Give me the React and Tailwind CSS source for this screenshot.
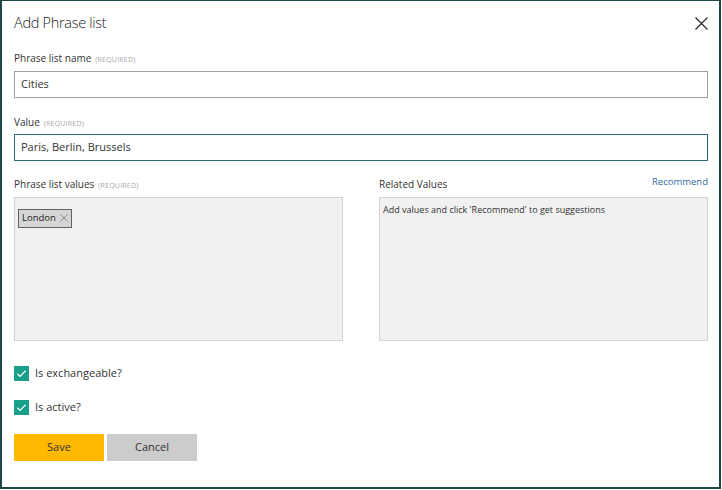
import React from 'react';

const font = { fontFamily: '"Open Sans", "Noto Sans", sans-serif' };

const Label = ({ children, required }) => (
  <div className="h-[14px] leading-[14px] text-[10px] text-[#333] whitespace-nowrap">
    {children}
    {required && <span className="ml-1 text-[7px] tracking-[0.2px] text-[#a8a8a8]">(REQUIRED)</span>}
  </div>
);

const Check = ({ label, className = '' }) => (
  <div className={`flex items-center h-[15px] ${className}`}>
    <span className="w-[15px] h-[15px] bg-[#1aa08a] flex items-center justify-center">
      <svg width="11" height="11" viewBox="0 0 12 12" fill="none">
        <path d="M1.5 6.2 L4.6 9.2 L10.6 2.8" stroke="#fff" strokeWidth="1.4" />
      </svg>
    </span>
    <span className="ml-[6px] text-[11px] text-[#333]">{label}</span>
  </div>
);

export default function App() {
  return (
    <div style={font} className="w-[722px] h-[490px] bg-white">
      <div className="w-[721px] h-[489px] border-x-2 border-b-2 border-t border-[#1d4848] pl-[12px] pt-[11px]">
        <div className="w-[694px]">
          {/* Header */}
          <div className="flex items-center justify-between h-[22px]">
            <div className="text-[14.5px] leading-[22px] font-light tracking-[-0.3px] text-[#222]">Add Phrase list</div>
            <svg width="13" height="13" viewBox="0 0 13 13">
              <path d="M0.5 0.5 L12.5 12.5 M12.5 0.5 L0.5 12.5" stroke="#222" strokeWidth="1.1" />
            </svg>
          </div>

          <div className="mt-[17px]">
            <Label required>Phrase list name</Label>
          </div>
          <div className="mt-[6px] h-[27px] border border-[#a0a0a0] flex items-center px-[6px] text-[11px] text-[#333]">
            Cities
          </div>

          <div className="mt-[17px]">
            <Label required>Value</Label>
          </div>
          <div className="mt-[5px] h-[27px] border border-[#2f6b7c] flex items-center px-[6px] text-[11px] text-[#333]">
            Paris, Berlin, Brussels
          </div>

          <div className="mt-[16px] flex gap-[36px]">
            <div className="w-[329px]">
              <Label required>Phrase list values</Label>
              <div className="mt-[6px] h-[144px] bg-[#f1f1f1] border border-[#d2d2d2] p-[5px] pl-[3px]">
                <span className="inline-flex items-center h-[19px] px-[3px] bg-[#d6d6d6] border border-[#606060] text-[9.5px] text-[#222]">
                  London
                  <svg width="8" height="8" viewBox="0 0 8 8" className="ml-[4px]">
                    <path d="M0.5 0.5 L7.5 7.5 M7.5 0.5 L0.5 7.5" stroke="#8a8a8a" strokeWidth="1" />
                  </svg>
                </span>
              </div>
            </div>
            <div className="w-[329px]">
              <div className="flex justify-between items-center h-[14px]">
                <Label>Related Values</Label>
                <span className="text-[9.5px] text-[#2e6da4] -mt-[4px]">Recommend</span>
              </div>
              <div className="mt-[6px] h-[144px] bg-[#f1f1f1] border border-[#d2d2d2] px-[3px] pt-[5px] text-[9px] text-[#333]">
                Add values and click 'Recommend' to get suggestions
              </div>
            </div>
          </div>

          <Check label="Is exchangeable?" className="mt-[25px]" />
          <Check label="Is active?" className="mt-[19px]" />

          <div className="mt-[19px] flex gap-[3px]">
            <button className="w-[90px] h-[27px] bg-[#ffb900] text-[11px] text-[#333]">Save</button>
            <button className="w-[90px] h-[27px] bg-[#cccccc] text-[11px] text-[#333]">Cancel</button>
          </div>
        </div>
      </div>
    </div>
  );
}
